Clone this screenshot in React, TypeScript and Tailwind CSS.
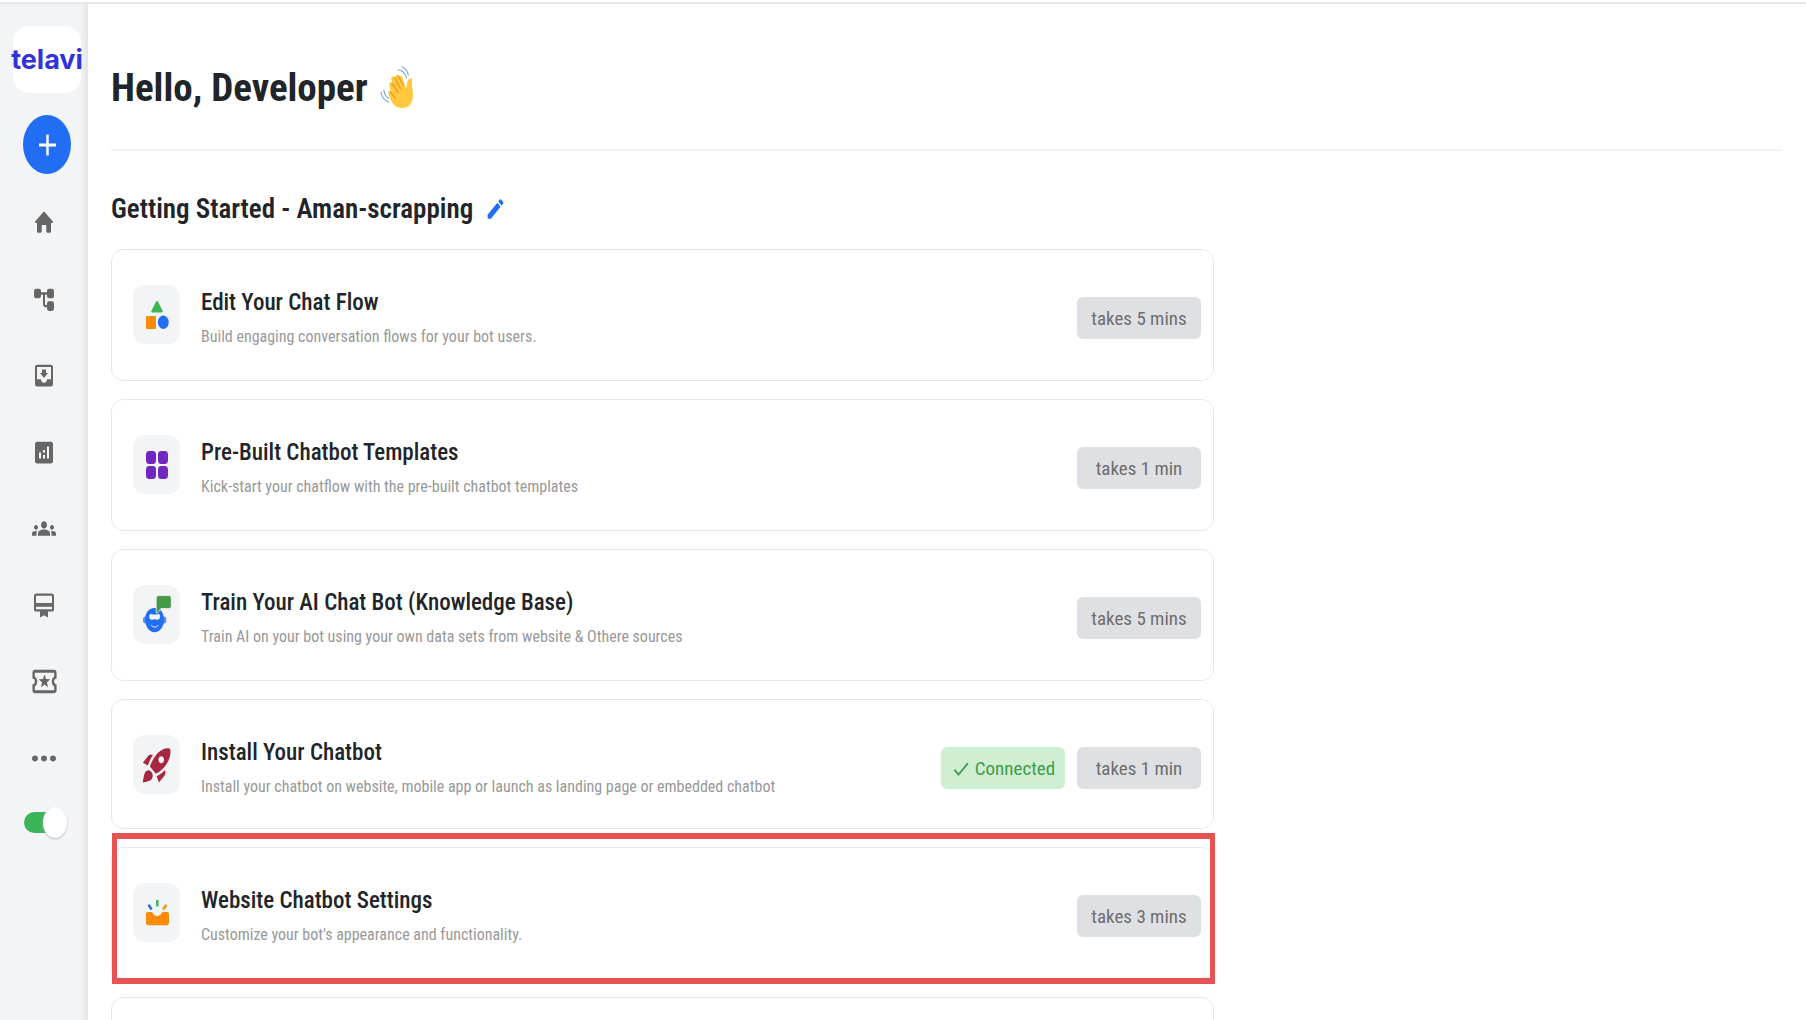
import type { ReactNode } from 'react';
import {
  MdAdd,
  MdAnalytics,
  MdCardMembership,
  MdCheck,
  MdEdit,
  MdGroups,
  MdMoreHoriz,
  MdMoveToInbox,
  MdOutlineLocalActivity,
  MdRocketLaunch,
} from 'react-icons/md';

type Step = {
  title: string;
  text: string;
  time: string;
  icon: ReactNode;
  connected?: boolean;
  highlighted?: boolean;
};

function HomeIcon() {
  return (
    <svg viewBox="0 0 24 24" preserveAspectRatio="none" fill="currentColor" className="h-[29px] w-6">
      <path d="M11.200 3.500 3.300 11c-.6.6-.3 1.400.5 1.400H5v6.800c0 .8.600 1.300 1.300 1.300h2.400c.6 0 1-.4 1-1V15c0-.5.4-.9.900-.9h2.800c.5 0 .9.400.9.900v4.500c0 .6.400 1 1 1h2.400c.7 0 1.300-.5 1.300-1.300v-6.800h1.200c.8 0 1.100-.8.500-1.400l-7.900-7.500c-.5-.4-1.100-.4-1.600 0z" />
    </svg>
  );
}

function FlowIcon() {
  return (
    <svg viewBox="0 0 24 24" preserveAspectRatio="none" fill="currentColor" className="h-[29px] w-6">
      <rect x="2" y="3" width="7" height="8" rx="2" />
      <rect x="15" y="3" width="7" height="8" rx="2" />
      <rect x="15" y="13.5" width="7" height="8" rx="2" />
      <path d="M8 7h8M12 7v8.500a2 2 0 0 0 2 2h2" fill="none" stroke="currentColor" strokeWidth="2" />
    </svg>
  );
}

function WaveIcon() {
  return (
    <svg viewBox="0 0 34 44" preserveAspectRatio="none" fill="none" className="h-[44px] w-[34px]">
      <path
        d="M17 41c-4-2-5.500-5-7-9l-1.800-5c-.6-2 1.600-2.800 2.600-1.400l-1.500-7c-.6-2.300 2-3.200 3-1.200l-1-4.500c-.4-2.600 2.400-3.400 3.400-1.100l.6-1.400c1-2 3-1.500 3.500.3l.5-.3c1.300-1 2.700-.2 3.100 1.200L26 23l1.300-7.200c.3-1.900 1.500-3.300 3.200-3.200 1.500.1 1.900 1.600 1.500 3.300-.7 3.400.9 7 1 12.100.2 9-4.500 14-9.500 14-2.500 0-4.500-.2-6.500-1z"
        fill="#ffc83d"
      />
      <path d="M10.500 26l4.500 6M12 17.500l6 9M14.800 12l5.800 11M18.500 10l4.500 9" stroke="#ee9d2b" strokeWidth="1.500" strokeLinecap="round" />
      <path d="M18 4c4 0 7 3 8.500 8M22 1c3 1 5.500 4 6.300 8M1 26c.5 5 3 8 7.500 10M3.800 24c.3 4 2 6.500 5.200 8.500" stroke="#78a9dc" strokeWidth="1.200" strokeLinecap="round" />
    </svg>
  );
}

function ShapesIcon() {
  return (
    <svg viewBox="0 0 47 59" className="size-full">
      <path d="M24 17l4.800 9.500h-9.600z" fill="#3cb554" stroke="#3cb554" strokeWidth="2" strokeLinejoin="round" />
      <rect x="13" y="31" width="10" height="13" rx="1" fill="#fb8c0a" />
      <ellipse cx="30.300" cy="37.300" rx="5.400" ry="6.700" fill="#216df3" />
    </svg>
  );
}

function TemplatesIcon() {
  return (
    <svg viewBox="0 0 47 59" fill="#7226c0" className="size-full">
      <rect x="13" y="16" width="10" height="13" rx="3" ry="4" />
      <rect x="25" y="16" width="10" height="13" rx="3" ry="4" />
      <rect x="13" y="31" width="10" height="13" rx="3" ry="4" />
      <rect x="25" y="31" width="10" height="13" rx="3" ry="4" />
    </svg>
  );
}

function BotIcon() {
  return (
    <svg viewBox="0 0 47 59" className="size-full">
      <ellipse cx="12.300" cy="35" rx="2.400" ry="3.600" fill="#5b90ee" />
      <ellipse cx="31" cy="35" rx="2.400" ry="3.600" fill="#5b90ee" />
      <path d="M21.600 23c6 0 9.400 5 9.400 11.500 0 7.500-4.400 12.700-9.400 12.700s-9.400-5.200-9.400-12.700C12.200 28 15.600 23 21.600 23z" fill="#216df3" />
      <path d="M16.300 30.500c0-1 .6-1.500 1.600-1.500 2.500.8 4.900.8 7.400 0 1 0 1.600.5 1.600 1.500v1.600c0 1.500-1 2.700-2.500 2.700-1.900-.7-3.700-.7-5.600 0-1.500 0-2.500-1.200-2.500-2.700z" fill="#f2f4f6" />
      <path d="M18.500 40.500c1.500 2.200 5 2.200 6.500 0" fill="none" stroke="#f2f4f6" strokeWidth="1" strokeLinecap="round" />
      <path d="M26 10.500h9.500c1.600 0 2.800 1.200 2.800 2.800v7.500c0 1.600-1.200 2.800-2.800 2.800H28l-3.800 4.600-1-.6V13.300c0-1.600 1.200-2.800 2.800-2.800z" fill="#459c48" stroke="#f2f4f6" strokeWidth=".8" />
    </svg>
  );
}

function SettingsIcon() {
  return (
    <svg viewBox="0 0 47 59" className="size-full">
      <path d="M15 29h3.500c1.500 0 1.600 4 5.700 4s4.200-4 5.700-4H34c1.200 0 2 .9 2 2v9c0 1.200-.8 2.200-2 2.200H15c-1.200 0-2-1-2-2.200v-9c0-1.100.8-2 2-2z" fill="#fb8c0a" />
      <path d="M24.300 17v6.500" stroke="#3cb554" strokeWidth="2.400" />
      <path d="M15.500 21.800l3.200 4.700" stroke="#216df3" strokeWidth="2.400" />
      <path d="M33.500 21.800l-3.500 4.700" stroke="#fb8c0a" strokeWidth="2.400" />
    </svg>
  );
}

const navIcon = 'h-[29px] w-6';

const NAV = [
  { label: 'Home', icon: <HomeIcon /> },
  { label: 'Chat flow', icon: <FlowIcon /> },
  { label: 'Inbox', icon: <MdMoveToInbox preserveAspectRatio="none" className={navIcon} /> },
  { label: 'Analytics', icon: <MdAnalytics preserveAspectRatio="none" className={navIcon} /> },
  { label: 'Team', icon: <MdGroups preserveAspectRatio="none" className={navIcon} /> },
  { label: 'Subscription', icon: <MdCardMembership preserveAspectRatio="none" className={navIcon} /> },
  { label: 'Offers', icon: <MdOutlineLocalActivity preserveAspectRatio="none" className="h-[35px] w-[29px]" /> },
  { label: 'More', icon: <MdMoreHoriz preserveAspectRatio="none" className="h-[35px] w-9" /> },
];

const STEPS: Step[] = [
  {
    title: 'Edit Your Chat Flow',
    text: 'Build engaging conversation flows for your bot users.',
    time: 'takes 5 mins',
    icon: <ShapesIcon />,
  },
  {
    title: 'Pre-Built Chatbot Templates',
    text: 'Kick-start your chatflow with the pre-built chatbot templates',
    time: 'takes 1 min',
    icon: <TemplatesIcon />,
  },
  {
    title: 'Train Your AI Chat Bot (Knowledge Base)',
    text: 'Train AI on your bot using your own data sets from website & Othere sources',
    time: 'takes 5 mins',
    icon: <BotIcon />,
  },
  {
    title: 'Install Your Chatbot',
    text: 'Install your chatbot on website, mobile app or launch as landing page or embedded chatbot',
    time: 'takes 1 min',
    icon: <MdRocketLaunch preserveAspectRatio="none" className="h-[42px] w-[34px] text-[#a72640]" />,
    connected: true,
  },
  {
    title: 'Website Chatbot Settings',
    text: "Customize your bot's appearance and functionality.",
    time: 'takes 3 mins',
    icon: <SettingsIcon />,
    highlighted: true,
  },
];

function Sidebar() {
  return (
    <aside className="flex w-[88px] shrink-0 flex-col items-center border-r-2 border-[#e4e6ea] bg-[#f2f4f6] pt-[22px] shadow-[inset_-6px_0_6px_-4px_#e4e6ea]">
      <div className="flex flex-col items-center gap-[22px] pl-2">
        <a
          href="#"
          className="flex h-[67px] w-[68px] items-center justify-center rounded-2xl bg-white font-['Inter',sans-serif] text-[27px] leading-8 font-bold text-[#3034d8]"
        >
          telavi
        </a>
        <button aria-label="New bot" className="flex h-[59px] w-12 items-center justify-center rounded-[50%] bg-[#216df3] text-white">
          <MdAdd preserveAspectRatio="none" className="h-9 w-[29px]" />
        </button>
      </div>

      <nav className="mt-[34px] flex h-[565px] flex-col justify-between pl-0.5">
        {NAV.map((item) => (
          <button key={item.label} aria-label={item.label} className="flex h-[29px] w-9 items-center justify-center text-[#666]">
            {item.icon}
          </button>
        ))}
      </nav>

      <label className="mt-[34px] flex h-[31px] items-center pl-1">
        <input type="checkbox" defaultChecked aria-label="Bot active" className="peer sr-only" />
        <span className="flex h-[21px] w-[43px] items-center justify-end rounded-full bg-gradient-to-r from-[#3cb559] from-80% to-transparent to-80%">
          <span className="h-[31px] w-6 shrink-0 rounded-[50%] bg-white shadow-[0_1px_2px_#bbb]" />
        </span>
      </label>
    </aside>
  );
}

function StepCard({ step }: { step: Step }) {
  return (
    <li
      className={`relative flex items-start rounded-xl border border-[#e8e8ea] pt-[35px] pr-3 pl-[21px] ${
        step.connected ? 'h-[130px]' : 'h-[132px]'
      }`}
    >
      <div className="flex h-[59px] w-[47px] shrink-0 items-center justify-center rounded-xl bg-[#f2f4f6]">
        {step.icon}
      </div>

      <div className="ml-[21px] flex-1 pt-1">
        <h3 className="text-[23px] leading-7 font-medium text-[#212529]">{step.title}</h3>
        <p className="mt-2.5 text-base leading-5 text-[#999]">{step.text}</p>
      </div>

      <div className="flex gap-3 pt-3 text-[19px] leading-6">
        {step.connected && (
          <span className="flex h-[42px] w-[124px] items-center justify-center gap-1 rounded-md bg-[#cfefd1] pt-0.5 text-[#439a4b]">
            <MdCheck preserveAspectRatio="none" className="h-6 w-5" />
            Connected
          </span>
        )}
        <span className="flex h-[42px] w-[124px] items-center justify-center rounded-md bg-[#dfe0e4] pt-0.5 text-[#6e6e6e]">
          {step.time}
        </span>
      </div>

      {step.highlighted && (
        <div className="pointer-events-none absolute -top-[15px] -right-0.5 -bottom-1.5 left-0 border-x-5 border-y-6 border-[#e75353]" />
      )}
    </li>
  );
}

export default function App() {
  return (
    <div className="h-screen overflow-hidden bg-white pt-0.5 font-['Roboto_Condensed','Roboto',sans-serif] text-[#212529]">
      <div className="flex h-full border-t-2 border-[#e8e8ea]">
        <Sidebar />

        <main className="flex-1 overflow-hidden pr-6 pl-[23px]">
          <header className="flex items-center gap-3 border-b-2 border-[#f0f2f4] pt-[60px] pb-[37px]">
            <h1 className="text-[39px] leading-12 font-bold">Hello, Developer</h1>
            <WaveIcon />
          </header>

          <div className="flex items-center gap-3 pt-10">
            <h2 className="text-[27px] leading-9 font-semibold">Getting Started - Aman-scrapping</h2>
            <button aria-label="Rename bot" className="text-[#216df3]">
              <MdEdit preserveAspectRatio="none" className="h-[26px] w-[21px]" />
            </button>
          </div>

          <ul className="mt-[22px] flex max-w-[1103px] flex-col gap-[18px]">
            {STEPS.map((step) => (
              <StepCard key={step.title} step={step} />
            ))}
            <li className="h-[132px] rounded-xl border border-[#e8e8ea]" />
          </ul>
        </main>
      </div>
    </div>
  );
}
